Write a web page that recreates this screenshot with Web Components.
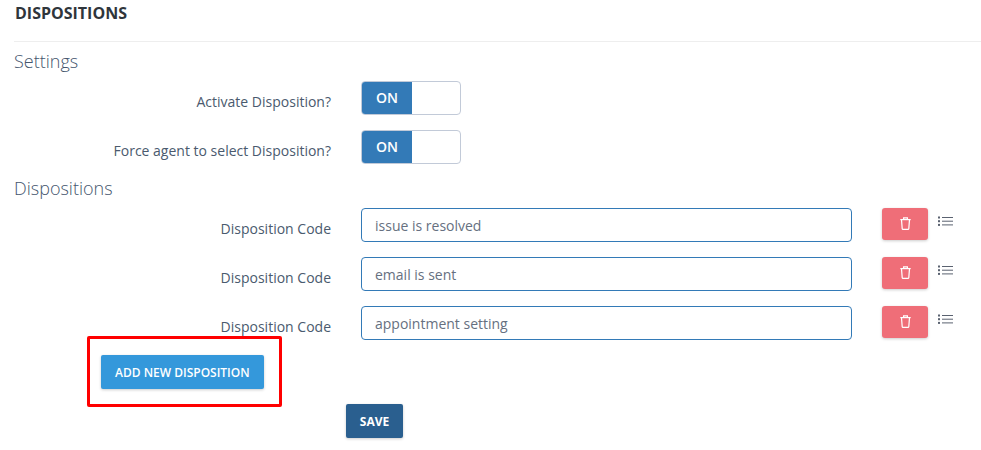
<!DOCTYPE html>
<html>
<head>
<meta charset="utf-8">
<title>Dispositions</title>
<style>
  html, body { margin: 0; background: #fff; }
  body { font-family: "Open Sans", sans-serif; font-size: 14px; color: #4a5568; overflow: hidden; }
</style>
</head>
<body>
<dispositions-page></dispositions-page>

<script>
// on/off switch, only the ON state is needed
class ToggleSwitch extends HTMLElement {
  constructor() {
    super();
    this.attachShadow({ mode: "open" }).innerHTML = `
    <style>
    :host { display: flex; width: 100px; height: 34px; box-sizing: border-box; border: 1px solid #c2cad8; border-radius: 4px; overflow: hidden; background: #fff; }
    .on {
      width: 51px;
      margin: -1px 0 -1px -1px;
      background: #337ab7;
      color: #fff;
      font-size: 14px;
      font-weight: 600;
      display: flex;
      align-items: center;
      justify-content: center;
      padding: 0 0 1px 1px;
      box-sizing: border-box;
    }
    </style>
    <div class="on"><slot></slot></div>`;
  }
}
customElements.define("toggle-switch", ToggleSwitch);

// label column + control column
class FormRow extends HTMLElement {
  constructor() {
    super();
    this.attachShadow({ mode: "open" }).innerHTML = `
    <style>
    :host { display: grid; grid-template-columns: 331px 1fr; column-gap: 30px; align-items: start; margin-left: -14px; }
    .label { text-align: right; font-size: 14px; line-height: 20px; color: #4a5a6e; padding-top: 11px; }
    .control { display: flex; align-items: flex-start; }
    </style>
    <div class="label"><slot name="label"></slot></div>
    <div class="control"><slot></slot></div>`;
  }
}
customElements.define("form-row", FormRow);

class CodeRow extends HTMLElement {
  constructor() {
    super();
    const value = this.getAttribute("value");
    this.attachShadow({ mode: "open" }).innerHTML = `
    <style>
    :host { display: block; }
    .wrap { display: flex; align-items: flex-start; }
    input {
      width: 491px;
      height: 34px;
      box-sizing: border-box;
      border: 1px solid #337ab7;
      border-radius: 4px;
      padding: 0 13px;
      font: 14px "Open Sans", sans-serif;
      color: #667080;
      outline: none;
      background: #fff;
    }
    button {
      width: 46px;
      height: 32px;
      margin-left: 30px;
      border: 0;
      border-radius: 3px;
      background: #ef6e78;
      box-shadow: 0 1px 3px rgba(0,0,0,.2);
      display: flex;
      align-items: center;
      justify-content: center;
      padding: 0 0 1px;
      box-sizing: border-box;
    }
    .list { margin: 8px 0 0 10px; display: block; }
    </style>
    <form-row>
      <span slot="label">Disposition Code</span>
      <div class="wrap">
        <input type="text" value="${value}">
        <button type="button" aria-label="Delete">
          <svg width="11" height="13" viewBox="0 0 11 13" fill="none" stroke="#fff" stroke-width="1.2">
            <path d="M.3 2.6h10.4"/>
            <path d="M3.6 2.6V.8h3.8v1.8"/>
            <path d="M1.5 2.6l.7 9q.1.8.8.8h5q.7 0 .8-.8l.7-9"/>
          </svg>
        </button>
        <svg class="list" width="15" height="12" viewBox="0 0 15 12">
          <g fill="#5a6270">
            <rect x="4" y="1" width="11" height="1"/>
            <rect x="4" y="4.7" width="11" height="1"/>
            <rect x="4" y="8.4" width="11" height="1"/>
            <rect x="0" y="0.5" width="2" height="2"/>
            <rect x="0" y="4.2" width="2" height="2"/>
            <rect x="0" y="7.9" width="2" height="2"/>
          </g>
        </svg>
      </div>
    </form-row>`;
  }
}
customElements.define("code-row", CodeRow);

class ActionButton extends HTMLElement {
  constructor() {
    super();
    this.attachShadow({ mode: "open" }).innerHTML = `
    <style>
    :host { display: inline-flex; align-items: center; justify-content: center; height: 34px; box-sizing: border-box; border-radius: 2px; padding: 0 14px; color: #fff; font-size: 12px; font-weight: 600; background: #3498db; box-shadow: 0 1px 3px rgba(0,0,0,.2); }
    :host([dark]) { background: #2a5f8f; font-weight: 700; }
    </style>
    <slot></slot>`;
  }
}
customElements.define("action-button", ActionButton);

class DispositionsPage extends HTMLElement {
  constructor() {
    super();
    this.attachShadow({ mode: "open" }).innerHTML = `
    <style>
    :host { display: block; position: relative; width: 981px; height: 450px; box-sizing: border-box; padding-left: 14px; }
    h1 { margin: 0; padding: 3px 0 0 1px; height: 42px; box-sizing: border-box; border-bottom: 1px solid #eee; font-size: 16px; line-height: 20px; font-weight: 700; color: #2f353b; }
    h2 { margin: 0; font-size: 18px; line-height: 24px; font-weight: 300; color: #45566e; }
    .settings { margin-top: 7px; }
    .rows { display: flex; flex-direction: column; }
    .top { margin-top: 8px; gap: 15px; }
    .codes { margin-top: 8px; gap: 15px; }
    .disp { margin-top: 12px; }
    .add { margin: 15px 0 0 87px; }
    .save { margin: 15px 0 0 332px; display: block; }
    .save action-button { width: 57px; padding: 0; }
    .mark { position: absolute; left: 87px; top: 336px; width: 195px; height: 71px; box-sizing: border-box; border: 3px solid #f00; border-radius: 2px; pointer-events: none; }
    </style>
    <header>
      <h1>DISPOSITIONS</h1>
    </header>
    <h2 class="settings">Settings</h2>
    <div class="rows top">
      <form-row><span slot="label">Activate Disposition?</span><toggle-switch>ON</toggle-switch></form-row>
      <form-row><span slot="label">Force agent to select Disposition?</span><toggle-switch>ON</toggle-switch></form-row>
    </div>
    <h2 class="disp">Dispositions</h2>
    <div class="rows codes">
      <code-row value="issue is resolved"></code-row>
      <code-row value="email is sent"></code-row>
      <code-row value="appointment setting"></code-row>
    </div>
    <div class="add"><action-button>ADD NEW DISPOSITION</action-button></div>
    <div class="save"><action-button dark>SAVE</action-button></div>
    <div class="mark"></div>`;
  }
}
customElements.define("dispositions-page", DispositionsPage);
</script>
</body>
</html>
